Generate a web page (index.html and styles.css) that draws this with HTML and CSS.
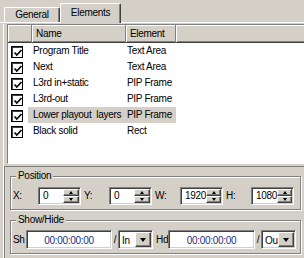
FILE: index.html
```html
<!DOCTYPE html>
<html lang="en">
<head>
    <meta charset="UTF-8">
    <title>Elements</title>
    <link rel="stylesheet" href="styles.css">
</head>
<body>
    <div class="tabs">
        <div class="tab">General</div>
        <div class="tab active">Elements</div>
    </div>
    <div class="panel">
        <div class="list">
            <div class="list-head">
                <div class="hc hc-check"></div>
                <div class="hc hc-name">Name</div>
                <div class="hc hc-elem">Element</div>
                <div class="hc hc-fill"></div>
            </div>
            <div class="row">
                <div class="chk-cell"><span class="chk"><svg viewBox="0 0 10 10" width="10" height="10"><polyline points="1.5,4.5 3.8,7 8.5,2" fill="none" stroke="#000" stroke-width="1.8"/></svg></span></div>
                <div class="name">Program Title</div>
                <div class="elem">Text Area</div>
            </div>
            <div class="row">
                <div class="chk-cell"><span class="chk"><svg viewBox="0 0 10 10" width="10" height="10"><polyline points="1.5,4.5 3.8,7 8.5,2" fill="none" stroke="#000" stroke-width="1.8"/></svg></span></div>
                <div class="name">Next</div>
                <div class="elem">Text Area</div>
            </div>
            <div class="row">
                <div class="chk-cell"><span class="chk"><svg viewBox="0 0 10 10" width="10" height="10"><polyline points="1.5,4.5 3.8,7 8.5,2" fill="none" stroke="#000" stroke-width="1.8"/></svg></span></div>
                <div class="name">L3rd in+static</div>
                <div class="elem">PIP Frame</div>
            </div>
            <div class="row">
                <div class="chk-cell"><span class="chk"><svg viewBox="0 0 10 10" width="10" height="10"><polyline points="1.5,4.5 3.8,7 8.5,2" fill="none" stroke="#000" stroke-width="1.8"/></svg></span></div>
                <div class="name">L3rd-out</div>
                <div class="elem">PIP Frame</div>
            </div>
            <div class="row sel">
                <div class="chk-cell"><span class="chk"><svg viewBox="0 0 10 10" width="10" height="10"><polyline points="1.5,4.5 3.8,7 8.5,2" fill="none" stroke="#000" stroke-width="1.8"/></svg></span></div>
                <div class="name">Lower playout  layers</div>
                <div class="elem">PIP Frame</div>
            </div>
            <div class="row">
                <div class="chk-cell"><span class="chk"><svg viewBox="0 0 10 10" width="10" height="10"><polyline points="1.5,4.5 3.8,7 8.5,2" fill="none" stroke="#000" stroke-width="1.8"/></svg></span></div>
                <div class="name">Black solid</div>
                <div class="elem">Rect</div>
            </div>
        </div>

        <div class="props">
            <fieldset class="group">
                <legend>Position</legend>
                <div class="fields">
                    <div class="field">
                        <label>X:</label>
                        <div class="spin"><span class="val">0</span><span class="btns"><span class="btn"><i class="up"></i></span><span class="btn"><i class="down"></i></span></span></div>
                    </div>
                    <div class="field">
                        <label>Y:</label>
                        <div class="spin"><span class="val">0</span><span class="btns"><span class="btn"><i class="up"></i></span><span class="btn"><i class="down"></i></span></span></div>
                    </div>
                    <div class="field">
                        <label>W:</label>
                        <div class="spin"><span class="val">1920</span><span class="btns"><span class="btn"><i class="up"></i></span><span class="btn"><i class="down"></i></span></span></div>
                    </div>
                    <div class="field">
                        <label>H:</label>
                        <div class="spin"><span class="val">1080</span><span class="btns"><span class="btn"><i class="up"></i></span><span class="btn"><i class="down"></i></span></span></div>
                    </div>
                </div>
            </fieldset>
            <fieldset class="group group-show">
                <legend>Show/Hide</legend>
                <div class="times">
                    <label class="lbl-sh">Sh</label>
                    <div class="time">00:00:00:00</div>
                    <span class="slash">/</span>
                    <div class="combo"><span class="val">In</span><span class="drop"><i class="down big"></i></span></div>
                    <label class="lbl-hd">Hd</label>
                    <div class="time time-hd">00:00:00:00</div>
                    <span class="slash">/</span>
                    <div class="combo"><span class="val">Ou</span><span class="drop"><i class="down big"></i></span></div>
                </div>
            </fieldset>
        </div>
    </div>
</body>
</html>
```

FILE: styles.css
```css
* {
    box-sizing: border-box;
}
body {
    margin: 0;
    width: 304px;
    height: 258px;
    overflow: hidden;
    background-color: #d4d0c8;
    font-family: "Liberation Sans", Arial, sans-serif;
    font-size: 10px;
    letter-spacing: -0.3px;
    color: #000;
}

/* tabs */
.tabs {
    display: flex;
    align-items: flex-end;
    height: 23px;
    padding-left: 4px;
    border-bottom: 1px solid #fff;
}
.tab {
    width: 56px;
    height: 15px;
    line-height: 13px;
    text-align: center;
    border: 1px solid #fff;
    border-bottom: none;
    border-right-color: #404040;
    border-radius: 2px 2px 0 0;
    box-shadow: inset -1px 0 #808080;
}
.tab.active {
    width: 61px;
    height: 20px;
    line-height: 17px;
    margin-bottom: -1px;
    background: #d4d0c8;
}

.panel {
    margin-left: 3px;
    height: 235px;
    border-left: 1px solid #fff;
}

/* list view */
.list {
    margin: 1px 0 0 3px;
    width: 310px;
    height: 140px;
    background: #fff;
    border-top: 1px solid #808080;
    border-left: 1px solid #808080;
    border-bottom: 1px solid #fff;
    overflow: hidden;
}
.list-head {
    display: flex;
    height: 18px;
}
.hc {
    height: 18px;
    line-height: 17px;
    padding-left: 4px;
    background: #d4d0c8;
    border-right: 1px solid #808080;
    border-bottom: 1px solid #404040;
    box-shadow: inset 1px 1px #fff, inset 0 -1px #808080;
}
.hc-check { width: 24px; }
.hc-name { width: 94px; }
.hc-elem { width: 50px; }
.hc-fill { flex: 1; }

.row {
    display: flex;
    height: 16px;
    line-height: 16px;
}
.chk-cell {
    width: 20px;
    padding: 3px 0 0 3px;
}
.chk {
    display: block;
    width: 12px;
    height: 12px;
    padding: 1px 0 0 1px;
    border: 1px solid #000;
    box-shadow: inset 1px 1px #404040;
    background: #fff;
}
.chk svg {
    display: block;
}
.name {
    width: 98px;
    padding-left: 5px;
    white-space: pre;
}
.elem {
    width: 50px;
    padding-left: 1px;
    white-space: nowrap;
    overflow: hidden;
}
.row.sel .name,
.row.sel .elem {
    background: #d4d0c8;
}

/* properties */
.props {
    margin-top: 2px;
    height: 100px;
    padding: 3px 0 0 5px;
    border-top: 1px solid #808080;
    border-left: 1px solid #808080;
}
.group {
    margin: 0;
    width: 291px;
    padding: 5px 0 4px 2px;
    border: 1px solid #808080;
    box-shadow: inset 1px 1px #fff, 1px 1px #fff;
}
.group legend {
    margin-left: 3px;
    padding: 0 2px;
    line-height: 12px;
    background: #d4d0c8;
}
.group-show {
    margin-top: 4px;
    padding-top: 4px;
}

.fields {
    display: flex;
    height: 18px;
}
.field {
    display: flex;
    width: 71px;
}
.field label {
    width: 25px;
    line-height: 18px;
}

.spin,
.time,
.combo {
    display: flex;
    height: 18px;
    padding: 1px;
    background: #fff;
    border: 1px solid;
    border-color: #808080 #fff #fff #808080;
    box-shadow: inset 1px 1px #404040, inset -1px -1px #d4d0c8;
}
.spin {
    width: 43px;
}
.spin .val {
    flex: 1;
    padding-left: 3px;
    line-height: 14px;
}
.btns {
    display: flex;
    flex-direction: column;
    width: 16px;
}
.btn,
.drop {
    flex: 1;
    display: flex;
    align-items: center;
    justify-content: center;
    background: #d4d0c8;
    border: 1px solid;
    border-color: #fff #404040 #404040 #fff;
    box-shadow: inset -1px -1px #808080;
}
.up,
.down {
    width: 0;
    height: 0;
    border-left: 2.5px solid transparent;
    border-right: 2.5px solid transparent;
}
.up {
    border-bottom: 3px solid #000;
}
.down {
    border-top: 3px solid #000;
}
.down.big {
    border-left-width: 3.5px;
    border-right-width: 3.5px;
    border-top-width: 4px;
}

.times {
    display: flex;
    height: 19px;
    line-height: 17px;
}
.times label {
    line-height: 19px;
}
.lbl-sh { width: 13px; }
.lbl-hd {
    width: 12px;
    margin-left: 3px;
}
.time {
    width: 86px;
    height: 19px;
    justify-content: center;
    color: #1a2f80;
}
.time-hd { width: 87px; }
.slash {
    width: 6px;
    text-align: center;
    line-height: 19px;
}
.combo {
    width: 35px;
    height: 19px;
}
.combo .val {
    flex: 1;
    padding-left: 2px;
    overflow: hidden;
}
.drop {
    flex: none;
    width: 16px;
}
```
